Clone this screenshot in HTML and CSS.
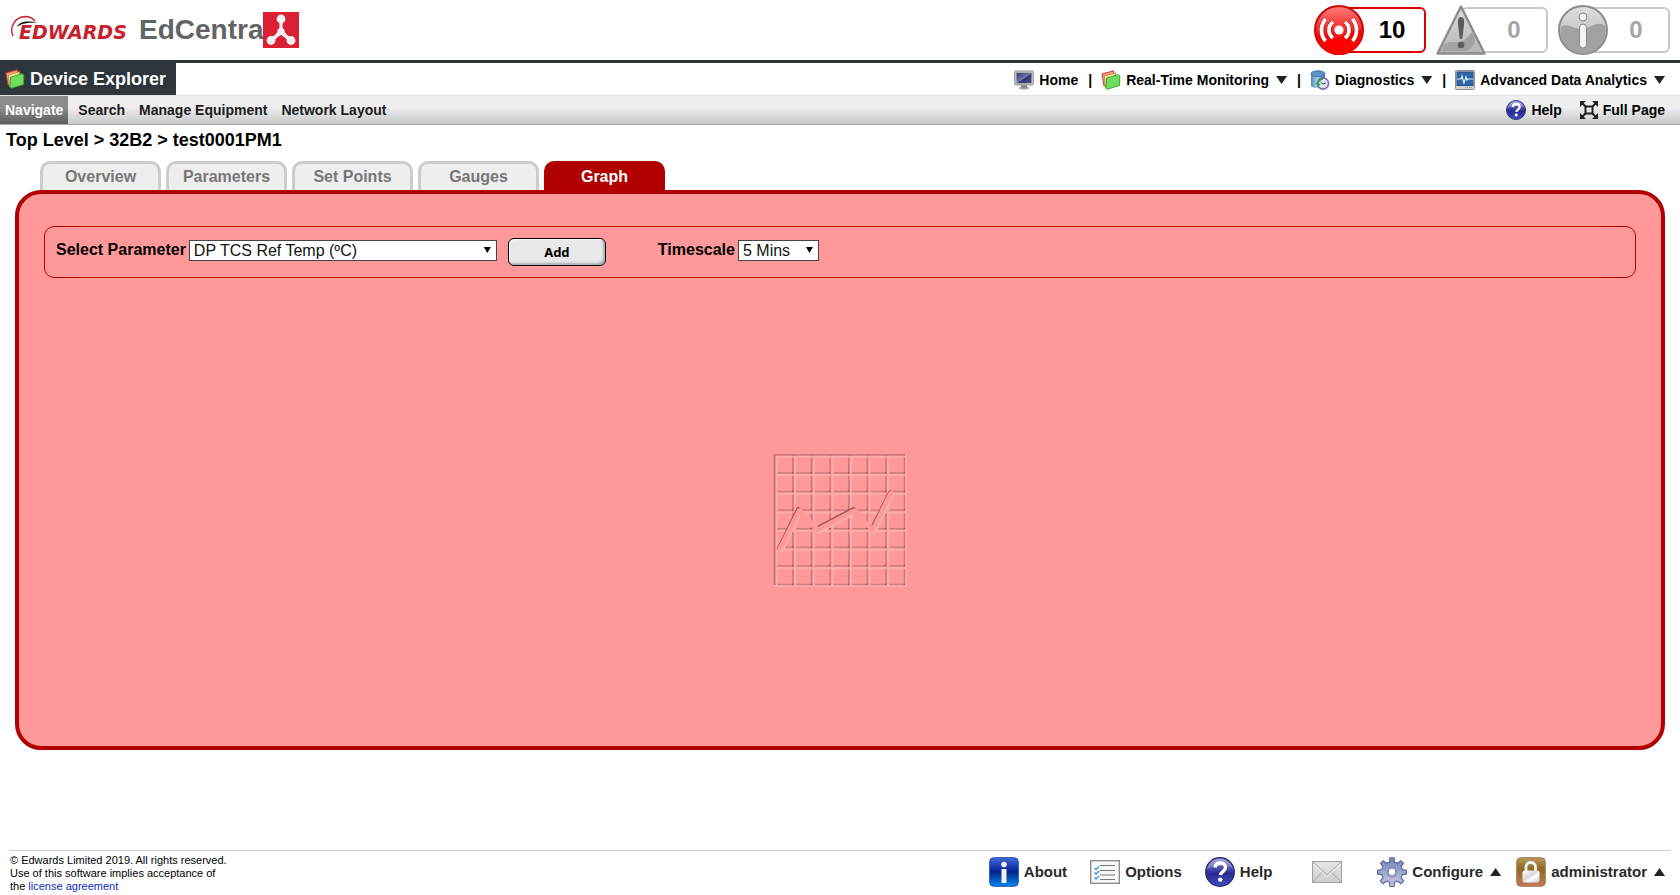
FILE: index.html
```html
<!DOCTYPE html>
<html lang="en">
<head>
<meta charset="utf-8">
<title>EdCentra - Device Explorer</title>
<link rel="stylesheet" href="styles.css">
</head>
<body>
<svg class="defs" width="0" height="0" aria-hidden="true">
  <defs>
    <linearGradient id="redBall" x1="0" y1="0" x2="0" y2="1"><stop offset="0" stop-color="#ff7d7d"/><stop offset=".6" stop-color="#f01818"/><stop offset="1" stop-color="#f00"/></linearGradient>
    <linearGradient id="grayBall" x1="0" y1="0" x2="0" y2="1"><stop offset="0" stop-color="#dedede"/><stop offset="1" stop-color="#b4b4b4"/></linearGradient>
    <linearGradient id="blueBall" x1="0" y1="0" x2="0" y2="1"><stop offset="0" stop-color="#8d8fd0"/><stop offset=".45" stop-color="#3f40a4"/><stop offset=".55" stop-color="#29298f"/><stop offset="1" stop-color="#4450c4"/></linearGradient>
    <linearGradient id="blueTile" x1="0" y1="0" x2="0" y2="1"><stop offset="0" stop-color="#4468d8"/><stop offset=".4" stop-color="#0c2ca4"/><stop offset=".5" stop-color="#00248c"/><stop offset="1" stop-color="#0a86f4"/></linearGradient>
    <linearGradient id="gearFill" x1="0" y1="0" x2="0" y2="1"><stop offset="0" stop-color="#6f85b8"/><stop offset="1" stop-color="#cfc6e6"/></linearGradient>
    <linearGradient id="lockTile" x1="0" y1="0" x2="0" y2="1"><stop offset="0" stop-color="#b39a5c"/><stop offset=".4" stop-color="#8c6a24"/><stop offset="1" stop-color="#c27a5c"/></linearGradient>
    <linearGradient id="silver" x1="0" y1="0" x2="1" y2="1"><stop offset="0" stop-color="#fff"/><stop offset=".45" stop-color="#d8d8d8"/><stop offset=".6" stop-color="#fff"/><stop offset="1" stop-color="#ccc"/></linearGradient>
    <linearGradient id="screen" x1="0" y1="0" x2="1" y2="1"><stop offset="0" stop-color="#33376e"/><stop offset=".5" stop-color="#7478a8"/><stop offset=".55" stop-color="#32366c"/><stop offset="1" stop-color="#4c5088"/></linearGradient>
    <linearGradient id="drum" x1="0" y1="0" x2="1" y2="0"><stop offset="0" stop-color="#4d83b8"/><stop offset=".45" stop-color="#b4d6ee"/><stop offset="1" stop-color="#3b72a8"/></linearGradient>
    <linearGradient id="paper" x1="0" y1="0" x2="0" y2="1"><stop offset="0" stop-color="#e6e6e6"/><stop offset="1" stop-color="#cdcdcd"/></linearGradient>
    <symbol id="cards" viewBox="0 0 20 20">
      <path d="M1 4 12.500 .8 14 12.500 3 16z" fill="#f59a92" stroke="#c93c34"/>
      <path d="M3.500 6 14.500 2.800 15.500 14 4.500 17.500z" fill="#fbe294" stroke="#c29a3c"/>
      <path d="M5.500 8.200 17 4.700 18.800 6 18.500 15.500 6 19.300 5 18z" fill="#6fdc62" stroke="#3ba636"/>
    </symbol>
    <symbol id="help" viewBox="0 0 30 30">
      <circle cx="15" cy="15" r="14.300" fill="url(#blueBall)" stroke="#20206c" stroke-width="1.200"/>
      <path d="M2 12C4 5 9 2 15 2s11 4 13 9c-8-3-18-3-26 1z" fill="#fff" opacity=".25"/>
      <path d="M10 10.500c.5-3.500 3-4.500 5.300-4.500 3 0 5.200 1.700 5.200 4.500 0 3.800-4.700 4-5 7.500" fill="none" stroke="#fff" stroke-width="3.400"/>
      <circle cx="15.300" cy="22.600" r="2.200" fill="#fff"/>
    </symbol>
  </defs>
</svg>

<header class="masthead">
  <div class="brand">
    <div class="edwards">
      <svg class="edwards-swoosh" width="30" height="24" viewBox="0 0 30 24" aria-hidden="true">
        <path d="M3 21C-1 12 5 2 15 1.500c5 0 8 2 10 4.500" fill="none" stroke="#c8202c" stroke-width="1.400"/>
        <path d="M6.500 12C10 6.500 16 5.500 28 7.500c-8 0-16 .5-21.500 4.500z" fill="#111"/>
      </svg>
      <span class="edwards-name">EDWARDS</span>
    </div>
    <span class="product">EdCentra</span>
    <svg class="product-mark" width="36" height="36" viewBox="0 0 36 36" aria-hidden="true">
      <rect width="36" height="36" fill="#dc2034"/>
      <g fill="#f4f4f4"><circle cx="18" cy="7" r="4.400"/><circle cx="8" cy="28.500" r="4.400"/><circle cx="28" cy="28.500" r="4.400"/><circle cx="18" cy="19.500" r="3.600"/>
      <path d="M16 8q1 6 0 11h4q-1-5 0-11zM16 18q-3 5-8.500 8l3 4q3-5 9-8zM20 18q3 5 8.500 8l-3 4q-3-5-9-8z"/></g>
    </svg>
  </div>
  <div class="alerts">
    <div class="alert alert-active">
      <svg class="alert-icon" width="50" height="50" viewBox="0 0 50 50" aria-hidden="true">
        <circle cx="25" cy="25" r="24" fill="url(#redBall)" stroke="#cb0808" stroke-width="2"/>
        <path d="M3 31C10 26 19 36 29 31 37 27 42 24 47 25A22 22 0 0 1 3 31z" fill="#f00"/>
        <circle cx="25" cy="25" r="4.600" fill="#fff"/>
        <g fill="none" stroke="#c00" stroke-width="5"><path d="M19 17a10 10 0 0 0 0 16M31 17a10 10 0 0 1 0 16M11.500 14a17 17 0 0 0 0 22M38.500 14a17 17 0 0 1 0 22"/></g>
        <g fill="none" stroke="#fff" stroke-width="3.800"><path d="M19 17a10 10 0 0 0 0 16M31 17a10 10 0 0 1 0 16M11.500 14a17 17 0 0 0 0 22M38.500 14a17 17 0 0 1 0 22"/></g>
      </svg>
      <span class="alert-count">10</span>
    </div>
    <div class="alert">
      <svg class="alert-icon" width="50" height="50" viewBox="0 0 50 50" aria-hidden="true">
        <path d="M25 1.500 48.500 48.500h-47z" fill="url(#grayBall)" stroke="#8c8c8c" stroke-width="2.400" stroke-linejoin="round"/>
        <path d="M8 40c7-6 12 0 20-5 6-4 6-8 10-8 4 10-2 19-10 19H5z" fill="#a2a2a2"/>
        <path d="M25 12c3 0 3.500 3 3 8l-1.500 12c-.5 3-2.500 3-3 0L22 20c-.5-5 0-8 3-8z" fill="#5c5c5c"/>
        <circle cx="25" cy="40" r="3.300" fill="#5c5c5c"/>
      </svg>
      <span class="alert-count">0</span>
    </div>
    <div class="alert">
      <svg class="alert-icon" width="50" height="50" viewBox="0 0 50 50" aria-hidden="true">
        <circle cx="25" cy="25" r="24" fill="url(#grayBall)" stroke="#8c8c8c" stroke-width="2"/>
        <path d="M3 22C10 16 19 28 29 23 37 19 42 17 47 21A22.500 22.500 0 1 1 3 22z" fill="#a2a2a2"/>
        <circle cx="25" cy="12" r="4" fill="#f4f4f4" stroke="#888"/>
        <rect x="21.500" y="19" width="7" height="24" rx="3.500" fill="#f4f4f4" stroke="#888"/>
      </svg>
      <span class="alert-count">0</span>
    </div>
  </div>
</header>

<div class="appbar">
  <h1 class="app-title"><svg width="20" height="20" aria-hidden="true"><use href="#cards"/></svg>Device Explorer</h1>
  <nav class="main-nav" aria-label="Main">
    <a href="#"><svg width="20" height="20" viewBox="0 0 20 20" aria-hidden="true"><ellipse cx="10" cy="18" rx="5" ry="1.600" fill="#a6a6a6"/><path d="M7 15h6v3H7z" fill="#8b8b8b"/><rect x=".7" y="1" width="18.600" height="14" rx="1" fill="#cfcfcf" stroke="#8e8e8e"/><rect x="2.500" y="2.700" width="15" height="10.600" fill="url(#screen)"/></svg>Home</a>
    <span class="sep">|</span>
    <a href="#"><svg width="20" height="20" aria-hidden="true"><use href="#cards"/></svg>Real-Time Monitoring<i class="caret"></i></a>
    <span class="sep">|</span>
    <a href="#"><svg width="20" height="20" viewBox="0 0 20 20" aria-hidden="true"><path d="M1 3.500v12c0 3.500 14 3.500 14 0v-12z" fill="url(#drum)"/><ellipse cx="8" cy="3.800" rx="7" ry="3" fill="#5b93c6" stroke="#3f77aa"/><circle cx="13" cy="13.500" r="5.600" fill="#e2e2f2" stroke="#6f6fc0" stroke-width="1.600"/><path d="M13 8a5.500 5.500 0 0 0-5.500 5.500l-2-1 2.500 5 3-4-2 .5A4 4 0 0 1 13 10z" fill="#35a53a"/><path d="m10.500 12 2.500 2 3-1" fill="none" stroke="#555"/></svg>Diagnostics<i class="caret"></i></a>
    <span class="sep">|</span>
    <a href="#"><svg width="20" height="20" viewBox="0 0 20 20" aria-hidden="true"><rect x=".5" y=".5" width="19" height="19" rx="1" fill="#d4d4d0" stroke="#8d8d8d"/><rect x="2" y="2" width="16" height="13.500" fill="#2f64a8" stroke="#285080"/><path d="M2 9h4l1-3 2 7 2-6 1 3 1-1h5" fill="none" stroke="#d6f0f6" stroke-width="1.200"/><path d="M10 17.500h7" stroke="#999" stroke-dasharray="1 1"/></svg>Advanced Data Analytics<i class="caret"></i></a>
  </nav>
</div>

<div class="subbar">
  <nav class="sub-nav" aria-label="Device Explorer">
    <a class="current" href="#">Navigate</a><a href="#">Search</a><a href="#">Manage Equipment</a><a href="#">Network Layout</a>
  </nav>
  <div class="sub-tools">
    <a href="#"><svg width="20" height="20" aria-hidden="true"><use href="#help"/></svg>Help</a>
    <a href="#"><svg width="18" height="18" viewBox="0 0 18 18" aria-hidden="true"><rect x="5.500" y="5.500" width="7" height="7" fill="none" stroke="#222" stroke-width="2"/><path d="m1 1 4.500 4.500M17 1l-4.500 4.500M1 17l4.500-4.500M17 17l-4.500-4.500" stroke="#222" stroke-width="2"/><path d="M0 0h6L0 6zM18 0h-6l6 6zM0 18h6l-6-6zM18 18h-6l6-6z" fill="#222"/></svg>Full Page</a>
  </div>
</div>

<h2 class="crumbs">Top Level &gt; 32B2 &gt; test0001PM1</h2>

<main class="content">
  <nav class="tabs" aria-label="Device views">
    <a href="#">Overview</a><a href="#">Parameters</a><a href="#">Set Points</a><a href="#">Gauges</a><a class="current" href="#">Graph</a>
  </nav>
  <section class="panel">
    <form class="toolbar">
      <label for="parameter">Select Parameter</label>
      <span class="select parameter-select"><select id="parameter"><option>DP TCS Ref Temp (ºC)</option></select></span>
      <button class="add" type="button">Add</button>
      <label for="timescale">Timescale</label>
      <span class="select timescale-select"><select id="timescale"><option>5 Mins</option></select></span>
    </form>
    <div class="graph-area">
      <svg width="134" height="134" viewBox="13 13 134 134" aria-hidden="true">
        <defs>
          <pattern id="cell" x="15.500" y="15.500" width="18.600" height="18.600" patternUnits="userSpaceOnUse">
            <path d="M1 17.500V1H17" fill="none" stroke="#ffb6b6" stroke-width="1.500"/>
            <path d="M17.500 2v15.500H2" fill="none" stroke="#c47070" stroke-width="1.400"/>
            <rect x="16.500" y="16.500" width="1.500" height="1.500" fill="#8c4c4c"/>
          </pattern>
        </defs>
        <path d="M14.500 145V15H145" fill="none" stroke="#bd6c6c" stroke-width="1.600"/>
        <path d="M14.500 146H146V15" fill="none" stroke="#ffb8b8" stroke-width="1.600"/>
        <rect x="15.500" y="15.500" width="130.200" height="130.200" fill="url(#cell)"/>
        <path d="m19.300 108.300 19-39M57.300 88.300l36-19M112.300 88.300l18-36" stroke="#a05858" stroke-width="4.400" stroke-linecap="round"/>
        <path d="m21 110 19-39M59 91l36-19M114 91l18-37" stroke="#ffbcbc" stroke-width="4.600" stroke-linecap="round"/>
        <path d="m20 109 19-38 19 19 36-19 19 19 18-37" fill="none" stroke="#f99" stroke-width="5" stroke-linecap="round" stroke-linejoin="round"/>
      </svg>
    </div>
  </section>
</main>

<footer class="footer">
  <p class="legal">© Edwards Limited 2019. All rights reserved.<br>Use of this software implies acceptance of<br>the <a href="#">license agreement</a></p>
  <nav class="footer-nav" aria-label="Application">
    <a href="#"><svg width="30" height="30" viewBox="0 0 30 30" aria-hidden="true"><rect x=".7" y=".7" width="28.600" height="28.600" rx="4" fill="url(#blueTile)" stroke="#1c4fae"/><circle cx="15" cy="7.500" r="2.800" fill="#f2f2f2"/><rect x="12.500" y="12" width="5" height="14" fill="#f2f2f2"/></svg>About</a>
    <a href="#"><svg width="30" height="24" viewBox="0 0 30 24" aria-hidden="true"><rect x=".7" y=".7" width="28.600" height="22.600" fill="#f8f8f8" stroke="#8c8c8c" stroke-width="1.400"/><path d="M10 5.500h15M10 10.500h15M10 15h15M10 19.500h15" stroke="#777"/><path d="m4.500 8 1.500 1.500L9 6.500M4.500 12.500 6 14l3-3M4.500 17.500 6 19l3-3" fill="none" stroke="#3d9be0" stroke-width="1.500"/></svg>Options</a>
    <a href="#"><svg width="30" height="30" aria-hidden="true"><use href="#help"/></svg>Help</a>
    <a class="mail" href="#" aria-label="Messages"><svg width="30" height="22" viewBox="0 0 30 22" aria-hidden="true"><rect x=".5" y=".5" width="29" height="21" fill="url(#paper)" stroke="#a0a0a0"/><path d="m1 1 14 13L29 1M1 21l10-10.500M29 21 19 10.500" fill="none" stroke="#a8a8a8"/><path d="m1 2.500 14 13 14-13" fill="none" stroke="#f4f4f4"/></svg></a>
    <a href="#"><svg width="30" height="30" viewBox="0 0 30 30" aria-hidden="true"><path fill-rule="evenodd" d="M12.500 5 13 .8h4L17.500 5l3 1.300 3.400-2.600 2.600 2.700-2.400 3.300 1.300 3 4.100.6v3.600l-4.100.7-1.300 3 2.500 3.300-2.700 2.700-3.400-2.500-3 1.200-.5 4.200h-4l-.5-4.200-3-1.200-3.400 2.500-2.700-2.700L6 20.600l-1.300-3-4.200-.7v-3.600l4.200-.6 1.300-3-2.500-3.300 2.600-2.700 3.400 2.600zM15 11a4 4 0 1 0 0 8 4 4 0 0 0 0-8z" fill="url(#gearFill)" stroke="#5d6a94" stroke-width="1.200"/></svg>Configure<i class="caret up"></i></a>
    <a class="user" href="#"><svg width="30" height="30" viewBox="0 0 30 30" aria-hidden="true"><rect x=".7" y=".7" width="28.600" height="28.600" rx="4" fill="url(#lockTile)" stroke="#a57850"/><path d="M10 15v-5c0-6 9.500-6 9.500 0v5" fill="none" stroke="#f2f2f2" stroke-width="2.800"/><rect x="6.500" y="13.500" width="17" height="12" rx="2" fill="url(#silver)"/></svg>administrator<i class="caret up"></i></a>
  </nav>
</footer>
</body>
</html>
```
FILE: styles.css
```css
* { box-sizing: border-box; }

body {
  margin: 0;
  min-height: 100vh;
  display: flex;
  flex-direction: column;
  background: #fff;
  color: #000;
  font: 16px/20px "Liberation Sans", Arial, sans-serif;
}

a { color: inherit; text-decoration: none; }
svg { display: block; flex: none; }
.defs { position: absolute; }
h1, h2, p { margin: 0; }

/* Masthead */
.masthead {
  display: flex;
  justify-content: space-between;
  align-items: center;
  padding: 5px 10px;
  border-bottom: 3px solid #2e363c;
}
.brand { display: flex; align-items: center; }
.edwards { position: relative; width: 129px; padding: 6px 0 0 9px; }
.edwards-swoosh { position: absolute; left: 0; top: -1px; }
.edwards-name {
  color: #c8202c;
  font: italic bold 19px/20px "DejaVu Sans", sans-serif;
}
.product { color: #636466; font-size: 28px; font-weight: bold; line-height: 36px; }

.alerts { display: flex; gap: 10px; }
.alert { display: flex; align-items: center; color: #a6a6a6; }
.alert-icon { position: relative; }
.alert-count {
  width: 87px;
  margin-left: -25px;
  padding-left: 19px;
  border: 2px solid #c8c8c8;
  border-radius: 6px;
  font-size: 24px;
  font-weight: bold;
  line-height: 42px;
  text-align: center;
}
.alert-active { color: #000; }
.alert-active .alert-count { border-color: #dc0000; }

/* Title and main navigation */
.appbar { display: flex; justify-content: space-between; }
.app-title {
  display: flex;
  align-items: center;
  gap: 5px;
  padding: 0 10px 0 5px;
  background: #2e363c;
  color: #fff;
  font-size: 18px;
  line-height: 32px;
}
.main-nav, .main-nav a, .sub-tools, .sub-tools a {
  display: flex;
  align-items: center;
  font-size: 14px;
  font-weight: bold;
}
.main-nav { padding: 2px 15px 0 0; }
.main-nav a, .sub-tools a { gap: 5px; }
.sep { padding: 0 9px 0 10px; }
.caret {
  width: 11px;
  height: 8px;
  margin-left: 2px;
  background: #222;
  clip-path: polygon(0 0, 100% 0, 50% 100%);
}
.caret.up { clip-path: polygon(50% 0, 100% 100%, 0 100%); }

.subbar {
  display: flex;
  justify-content: space-between;
  height: 30px;
  border-top: 1px solid #e2e2e2;
  border-bottom: 1px solid #a8a8a8;
  background: linear-gradient(#eee 40%, #c8c8c8);
}
.sub-nav { display: flex; gap: 14px; font-size: 14px; font-weight: bold; line-height: 28px; color: #1c1c1c; }
.sub-nav .current {
  margin-right: -4px;
  padding: 0 5px;
  background: linear-gradient(#8c8c8c 40%, #5e5e5e);
  color: #fff;
}
.sub-tools { gap: 18px; padding-right: 15px; }

.crumbs { padding: 5px 6px; font-size: 18px; line-height: 20px; }

/* Tabs and panel */
.content { flex: 1; display: flex; flex-direction: column; padding: 6px 15px 0; }
.tabs { display: flex; gap: 5px; padding-left: 25px; }
.tabs a {
  width: 121px;
  border: 3px solid #ccc;
  border-bottom: 0;
  border-radius: 10px 10px 0 0;
  background: #eee;
  color: #777;
  font-weight: bold;
  line-height: 26px;
  text-align: center;
}
.tabs .current { border-color: #b00000; background: #b00000; color: #fff; }
.panel {
  flex: 1;
  display: flex;
  flex-direction: column;
  padding: 32px 25px 0;
  border: 4px solid #b00000;
  border-radius: 26px;
  background: #f99;
}
.toolbar {
  display: flex;
  align-items: flex-start;
  padding: 11px;
  border: 1px solid #b00000;
  border-radius: 10px;
}
.toolbar label { font-weight: bold; line-height: 24px; }
.select { position: relative; margin: 2px 0 0 3px; }
.select::after {
  content: "";
  position: absolute;
  right: 6px;
  top: 7px;
  width: 7px;
  height: 6px;
  background: #000;
  clip-path: polygon(0 0, 100% 0, 50% 100%);
  pointer-events: none;
}
.select select {
  display: block;
  width: 100%;
  height: 21px;
  padding: 0 4px;
  border: 1px solid #444;
  border-radius: 0;
  background: #fff;
  color: #111;
  font: inherit;
  line-height: 19px;
  appearance: none;
}
.parameter-select { width: 308px; }
.timescale-select { width: 81px; }
.add {
  width: 98px;
  height: 28px;
  margin: 0 52px 0 11px;
  border: 1px solid #000;
  border-radius: 6px;
  background: #e8e8e8;
  box-shadow: inset -2px -2px 2px #a8b0b4, inset 1px 1px 1px #fff;
  font: bold 13px/20px "Noto Sans", "Open Sans", sans-serif;
}
.graph-area {
  flex: 1;
  display: flex;
  align-items: center;
  justify-content: center;
  padding-top: 16px;
}

/* Footer */
.footer {
  display: flex;
  justify-content: space-between;
  margin: 100px 10px 0;
  padding-bottom: 2px;
  border-top: 1px solid #ccc;
}
.legal { padding-top: 3px; font-size: 11px; line-height: 13px; }
.legal a { color: #0a2cc8; }
.footer-nav { display: flex; align-items: center; gap: 23px; padding-right: 5px; }
.footer-nav a { display: flex; align-items: center; gap: 5px; color: #2a2a2a; font-size: 15px; font-weight: bold; }
.footer-nav .mail { margin: 0 12px 0 17px; }
.footer-nav .user { margin-left: -8px; }
```
